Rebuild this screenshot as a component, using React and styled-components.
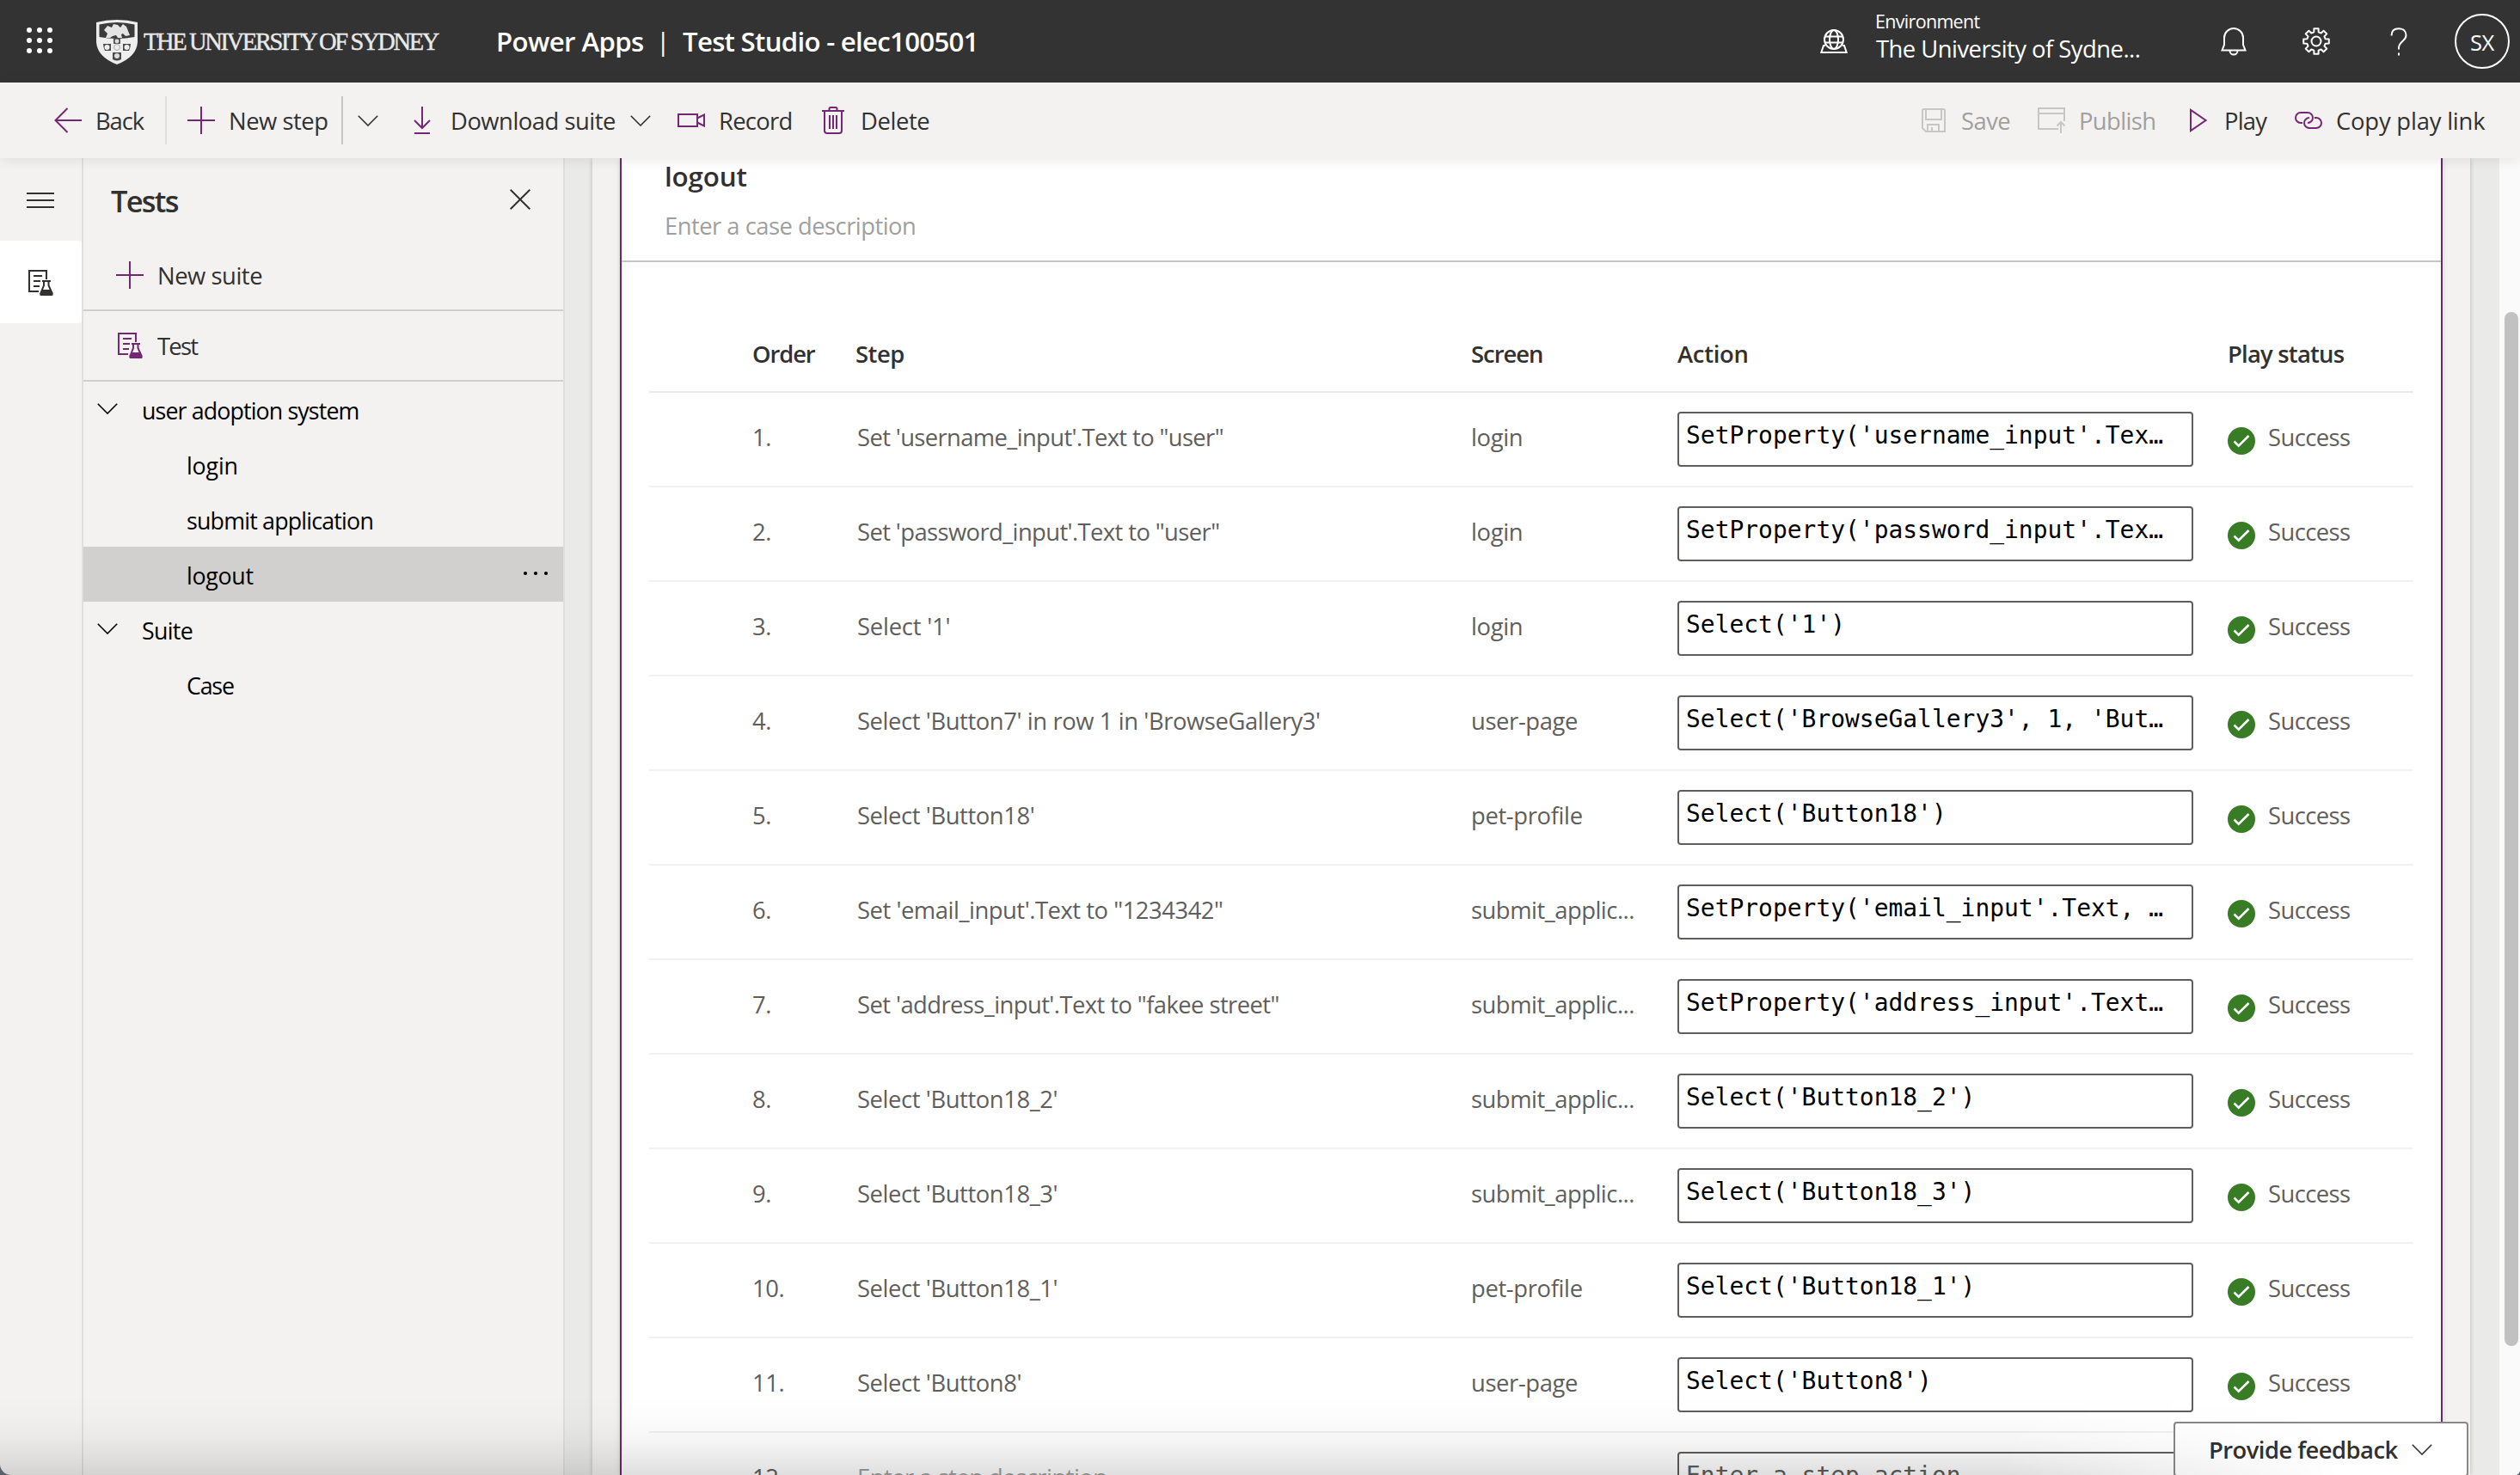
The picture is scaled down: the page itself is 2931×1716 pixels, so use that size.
import React from 'react';
import styled, { createGlobalStyle, css } from 'styled-components';

const purple = '#742774';

const GlobalStyle = createGlobalStyle`
  *, *::before, *::after { box-sizing: border-box; }
  html, body { margin: 0; padding: 0; overflow: hidden; background: #59616a; }
  svg { display: block; flex: none; }
`;

const Window = styled.div`
  position: relative;
  width: 2931px;
  height: 1716px;
  display: flex;
  flex-direction: column;
  overflow: hidden;
  border-radius: 0 0 6px 13px;
  background: #f3f2f1;
  color: #323130;
  font-family: 'Open Sans', 'Noto Sans', sans-serif;
  font-size: 27.4px;
  white-space: nowrap;
`;

const Label = styled.span`
  letter-spacing: ${(p) => p.$track || -0.018}em;
`;

/* ---------- header ---------- */

const Header = styled.header`
  flex: none;
  height: 96px;
  display: flex;
  align-items: center;
  background: #333333;
  color: #fff;
`;

const Waffle = styled.div`
  width: 111px;
  padding-left: 31px;
  padding-bottom: 2px;
`;

const Wordmark = styled.div`
  width: 466px;
  display: flex;
  align-items: center;
  gap: 6px;
  font-family: 'Liberation Serif', serif;
  font-size: 28.5px;
  letter-spacing: -0.083em;
  color: #e9e9e9;
  -webkit-text-stroke: 0.4px #e9e9e9;
  svg { margin-top: 1px; }
  span { padding-top: 2px; }
`;

const Brand = styled.div`
  width: 186px;
  font-size: 31.2px;
  font-weight: 600;
  letter-spacing: -0.02em;
`;

const BrandBar = styled(Brand)`
  width: 17px;
  margin-right: 14px;
  padding-bottom: 2px;
  font-weight: 400;
  font-size: 30px;
`;

const AppTitle = styled(Brand)`
  flex: 1;
  width: auto;
  letter-spacing: -0.023em;
`;

const Environment = styled.div`
  width: 433px;
  height: 96px;
  display: flex;
  gap: 32px;
  svg { margin-top: 34px; }
`;

const EnvironmentText = styled.div`
  display: flex;
  flex-direction: column;
`;

const EnvironmentCaption = styled.span`
  margin-top: 10px;
  font-size: 21.5px;
  line-height: 30px;
  letter-spacing: -0.032em;
`;

const EnvironmentName = styled.span`
  line-height: 34px;
  letter-spacing: -0.019em;
  margin-left: 1px;
`;

const HeaderButton = styled.div`
  width: 96px;
  height: 96px;
  display: flex;
  align-items: center;
  justify-content: center;
`;

const Avatar = styled.div`
  width: 64px;
  height: 64px;
  margin: 0 12px 0 17px;
  display: flex;
  align-items: center;
  justify-content: center;
  padding-top: 2px;
  border: 2px solid #fff;
  border-radius: 50%;
  font-size: 25.5px;
`;

/* ---------- command bar ---------- */

const CommandBar = styled.nav`
  position: relative;
  z-index: 2;
  flex: none;
  height: 88px;
  display: flex;
  align-items: center;
  padding: 0 37px 0 63px;
  background: #f3f2f1;
  box-shadow: 0 2px 14px rgba(0, 0, 0, 0.09);
`;

const Command = styled.div`
  width: ${(p) => p.$w}px;
  padding-left: ${(p) => p.$pad || 0}px;
  display: flex;
  align-items: center;
  gap: ${(p) => p.$gap || 16}px;
  color: ${(p) => (p.$off ? '#a19f9d' : '#323130')};
`;

const CommandIcon = styled.span`
  width: 32px;
  flex: none;
  display: flex;
  justify-content: center;
  color: ${(p) => (p.$off ? '#c8c6c4' : purple)};
`;

const Separator = styled.span`
  width: 2px;
  height: 56px;
  background: ${(p) => (p.$dark ? '#c8c6c4' : '#e1dfdd')};
`;

const SplitChevron = styled.div`
  width: 58px;
  display: flex;
  justify-content: center;
`;

const Spacer = styled.div`
  flex: 1;
`;

/* ---------- left rail and tree ---------- */

const Body = styled.div`
  flex: 1;
  min-height: 0;
  display: flex;
`;

const Rail = styled.aside`
  width: 97px;
  flex: none;
  border-right: 2px solid #e1dfdd;
`;

const RailItem = styled.div`
  height: 96px;
  padding: 2px 1px 0 0;
  display: flex;
  align-items: center;
  justify-content: center;
  ${(p) =>
    p.$active &&
    css`
      background: #fff;
      border-radius: 0 4px 4px 0;
    `}
`;

const TestsPanel = styled.aside`
  width: 560px;
  flex: none;
  border-right: 2px solid #e1dfdd;
`;

const PanelHeader = styled.div`
  height: 96px;
  display: flex;
  align-items: center;
  justify-content: space-between;
  padding: 2px 38px 0 32px;
  font-size: 34.4px;
  font-weight: 600;
  svg { margin-bottom: 2px; }
`;

const PanelAction = styled.div`
  height: ${(p) => p.$h}px;
  padding-left: 38px;
  display: flex;
  align-items: center;
  gap: 16px;
  border-bottom: 2px solid #d0cfcd;
`;

const PanelActionLabel = styled(Label)`
  padding-top: 1px;
`;

const PanelActionIcon = styled.span`
  width: 32px;
  display: flex;
  justify-content: center;
  color: ${purple};
`;

const TreeRow = styled.div`
  height: 64px;
  display: flex;
  align-items: center;
  padding: 2px 17px 0 ${(p) => (p.$child ? 120 : 16)}px;
  font-size: 26.8px;
  color: #000;
  background: ${(p) => (p.$selected ? '#d2d0ce' : 'transparent')};
  svg { margin-bottom: 4px; }
`;

const SuiteName = styled.span`
  margin-left: 28px;
`;

/* ---------- case sheet ---------- */

const Stage = styled.main`
  flex: 1;
  display: flex;
  justify-content: flex-start;
  padding-left: 32px;
  background: #eaeae8;
`;

const Sheet = styled.section`
  width: 2184px;
  flex: none;
  padding: 0 32px;
  background: #f3f2f1;
  box-shadow: 0 0 5px rgba(0, 0, 0, 0.22);
`;

const CaseCard = styled.section`
  width: 2120px;
  height: 1532px;
  overflow: hidden;
  border: solid #68286a;
  border-width: 0 2px;
  background: #fff;
  box-shadow: 0 0 6px rgba(0, 0, 0, 0.13);
`;

const CaseHeader = styled.div`
  height: 121px;
  padding-left: 50px;
  display: flex;
  flex-direction: column;
  gap: 16px;
  border-bottom: 2px solid #c8c6c4;
`;

const CaseTitle = styled.div`
  font-size: 31.4px;
  font-weight: 600;
  line-height: 41px;
  letter-spacing: -0.005em;
`;

const CaseDescription = styled.div`
  line-height: 44px;
  letter-spacing: -0.019em;
  color: #a19f9d;
`;

const Table = styled.div`
  width: 2052px;
  margin: 62px 0 0 32px;
`;

const tableGrid = css`
  display: grid;
  grid-template-columns: 120px 120px 716px 240px 640px 1fr;
  align-items: center;
`;

const TableHead = styled.div`
  ${tableGrid}
  height: 90px;
  padding-top: 1px;
  font-weight: 600;
  border-bottom: 2px solid #eaeaea;
`;

const TableRow = styled.div`
  ${tableGrid}
  height: 110px;
  color: #605e5c;
  border-bottom: 2px solid #f1f1f1;
`;

const Cell = styled.span`
  padding: 0 0 6px ${(p) => p.$indent || 0}px;
  letter-spacing: ${(p) => p.$track || -0.015}em;
  color: ${(p) => (p.$hint ? '#a19f9d' : 'inherit')};
`;

const ActionField = styled.div`
  width: 600px;
  height: 64px;
  padding: 0 8px;
  border: 2px solid #605e5c;
  border-radius: 4px;
  background: #fff;
  font-family: 'DejaVu Sans Mono', monospace;
  font-size: 27.95px;
  line-height: 52px;
  color: ${(p) => (p.$hint ? '#605e5c' : '#000')};
`;

const Status = styled.div`
  display: flex;
  align-items: center;
  gap: 15px;
  svg { margin-top: 4px; }
`;

const ScrollTrack = styled.div`
  width: 24px;
  margin-left: auto;
  padding: 179px 0 0 6px;
  background: #fafafa;
`;

const ScrollThumb = styled.div`
  width: 16px;
  height: 1203px;
  border-radius: 8px;
  background: #c1c1c1;
`;

/* ---------- overlays ---------- */

const BottomShade = styled.div`
  position: absolute;
  z-index: 4;
  left: 0;
  bottom: 0;
  width: 2760px;
  height: 92px;
  pointer-events: none;
  background: linear-gradient(
    to bottom,
    rgba(0, 0, 0, 0) 0%,
    rgba(0, 0, 0, 0.012) 30%,
    rgba(0, 0, 0, 0.04) 56%,
    rgba(0, 0, 0, 0.08) 78%,
    rgba(0, 0, 0, 0.125) 100%
  );
  mask-image: linear-gradient(to right, #000 0, #000 2330px, transparent 2720px);
`;

const FeedbackButton = styled.div`
  position: absolute;
  z-index: 3;
  left: 2528px;
  bottom: -2px;
  width: 343px;
  height: 64px;
  padding: 0 40px 0 39px;
  display: flex;
  align-items: center;
  justify-content: space-between;
  border: 2px solid #8a8886;
  border-radius: 4px;
  background: #fff;
  font-weight: 600;
`;

/* ---------- icons ---------- */

const Icon = ({ w, h, children, stroke = 2 }) => (
  <svg width={w} height={h} viewBox={`0 0 ${w} ${h}`} fill="none" stroke="currentColor" strokeWidth={stroke}>
    {children}
  </svg>
);

const Chevron = () => (
  <Icon w={24} h={13} stroke={1.6}><path d="M.8 .8 12 12 23.2 .8" /></Icon>
);
const BackIcon = () => (
  <Icon w={32} h={30}><path d="M15.5 1 1.5 15l14 14M1.5 15H32" /></Icon>
);
const PlusIcon = () => (
  <Icon w={32} h={32}><path d="M16 0v32M0 16h32" /></Icon>
);
const DownloadIcon = () => (
  <Icon w={20} h={32}><path d="M10 0v25M1 16l9 9 9-9M1 31h18" /></Icon>
);
const CameraIcon = () => (
  <Icon w={32} h={16}><path d="M1 1h22v14H1zM23 5.5l8-4v13l-8-4" /></Icon>
);
const TrashIcon = () => (
  <Icon w={26} h={32}><path d="M0 5h26M8.5 5V2.500Q8.500 1 10 1h6q1.500 0 1.500 1.500V5M3 5v23q0 3 3 3h14q3 0 3-3V5M9 10v16M13 10v16M17 10v16" /></Icon>
);
const SaveIcon = () => (
  <Icon w={28} h={28}><path d="M2.500 1H25.500Q27 1 27 2.500V27H5L1 23V2.500Q1 1 2.500 1ZM5 1v12h18V1M7 27v-8h13v8M12 22v5" /></Icon>
);
const PublishIcon = () => (
  <Icon w={32} h={30}><path d="M31 16V1H1v24h23M1 7h30M27 30V17M22.500 21.500 27 17l4.500 4.500" /></Icon>
);
const PlayIcon = () => (
  <Icon w={20} h={28}><path d="M1 2v24L18.500 14z" /></Icon>
);
const LinkIcon = () => (
  <Icon w={32} h={20}><path d="M9 13H7A6 6 0 0 1 7 1h8a6 6 0 0 1 0 12M23 7h2a6 6 0 0 1 0 12h-8a6 6 0 0 1 0-12" /></Icon>
);
const MenuIcon = () => (
  <Icon w={32} h={18}><path d="M0 1h32M0 9h32M0 17h32" /></Icon>
);
const CloseIcon = () => (
  <Icon w={24} h={24}><path d="M.7 .7l22.600 22.600M23.300 .7.7 23.300" /></Icon>
);
const TestIcon = () => (
  <Icon w={29} h={30}>
    <path d="M12 25H1V1h20v10M6 7h10M6 13h8M6 19h7M16 13h10M18 13v5l-4 10M23.500 13v5l4.500 10" />
    <path d="M15.700 23h10.600l2.200 5.200Q29 30 27.500 30H14.500Q13 30 13.500 28.200z" fill="currentColor" stroke="none" />
  </Icon>
);
const GlobeIcon = () => (
  <Icon w={32} h={28}>
    <circle cx="16" cy="12" r="11" />
    <ellipse cx="16" cy="12" rx="5" ry="11" />
    <path d="M6 8.500h20M6 15.500h20M6 19H4L1.300 27h29.400L28 19h-2" />
  </Icon>
);
const BellIcon = () => (
  <Icon w={30} h={33}><path d="M1.500 26.500 4 20V12a11 11 0 0 1 22 0v8l2.500 6.500zM10.500 27a4.500 4.500 0 0 0 9 0" /></Icon>
);
const HelpIcon = () => (
  <Icon w={20} h={33}><path d="M1.500 9.500C1.500 4 5 1.200 10 1.200s8.500 3 8.500 7.800c0 7-8.500 7-8.500 14.500v2M10 29.500v3" /></Icon>
);

const gearPoints = Array.from({ length: 8 }, (_, i) => {
  const at = (deg, r) => {
    const a = ((i * 45 + deg) * Math.PI) / 180;
    return `${(16 + r * Math.cos(a)).toFixed(2)},${(16 + r * Math.sin(a)).toFixed(2)}`;
  };
  return [at(-14, 11), at(-10, 15), at(10, 15), at(14, 11)].join(' ');
}).join(' ');

const GearIcon = () => (
  <Icon w={32} h={32}>
    <polygon points={gearPoints} strokeLinejoin="round" />
    <circle cx="16" cy="16" r="5.500" />
  </Icon>
);

const WaffleIcon = () => (
  <svg width="30" height="30" viewBox="0 0 30 30" fill="#fff">
    {[3, 15, 27].map((y) => [3, 15, 27].map((x) => <circle key={`${x}-${y}`} cx={x} cy={y} r="3" />))}
  </svg>
);

const DotsIcon = () => (
  <svg width="30" height="6" viewBox="0 0 30 6" fill="#000">
    {[3, 15, 27].map((x) => <circle key={x} cx={x} cy="3" r="2.100" />)}
  </svg>
);

const SuccessIcon = () => (
  <svg width="32" height="32" viewBox="0 0 32 32" fill="none">
    <circle cx="16" cy="16" r="16" fill="#387c26" />
    <path d="M7.500 16.500l5.200 5.200L24.500 10" stroke="#fff" strokeWidth="2.600" />
  </svg>
);

const Crest = () => (
  <svg width="50" height="54" viewBox="0 0 50 54">
    <path d="M1 4Q25-2 49 4V27Q48 44 25 53 2 44 1 27z" fill="#eee" />
    <path d="M4.500 6.500Q25 1.500 45.500 6.500V21Q25 25 4.500 21z" fill="#3b3b3b" />
    <path d="M10 13l4-5 5 2 2-4 5 1 3 3 3-4 4 3 2 5 2 5-5 1-3-3-2 1 1 4h-5l-2-3-4 1-3 2h-5l2-5-2-2z" fill="#e4e4e4" />
    <path d="M9 29h9v8h-7Q9 33 9 29zM32 29h9q0 4-2 8h-7zM20 39h10v8q-5 3-10 0z" fill="#4a4a4a" />
    <path d="M21 23h8v6h-8z" fill="#555" />
    <circle cx="13.500" cy="33" r="3" fill="#eee" />
    <circle cx="36.500" cy="33" r="3" fill="#eee" />
    <circle cx="25" cy="43" r="3" fill="#ddd" />
    <circle cx="25" cy="26" r="2.400" fill="#ddd" />
    <circle cx="25" cy="33" r="3.500" fill="none" stroke="#aaa" />
  </svg>
);

/* ---------- data ---------- */

const steps = [
  ["Set 'username_input'.Text to \"user\"", 'login', "SetProperty('username_input'.Tex…", -0.023],
  ["Set 'password_input'.Text to \"user\"", 'login', "SetProperty('password_input'.Tex…", -0.022],
  ["Select '1'", 'login', "Select('1')", -0.008],
  ["Select 'Button7' in row 1 in 'BrowseGallery3'", 'user-page', "Select('BrowseGallery3', 1, 'But…"],
  ["Select 'Button18'", 'pet-profile', "Select('Button18')"],
  ["Set 'email_input'.Text to \"1234342\"", 'submit_applic...', "SetProperty('email_input'.Text, …", -0.017],
  ["Set 'address_input'.Text to \"fakee street\"", 'submit_applic...', "SetProperty('address_input'.Text…", -0.021],
  ["Select 'Button18_2'", 'submit_applic...', "Select('Button18_2')"],
  ["Select 'Button18_3'", 'submit_applic...', "Select('Button18_3')"],
  ["Select 'Button18_1'", 'pet-profile', "Select('Button18_1')"],
  ["Select 'Button8'", 'user-page', "Select('Button8')"],
];

const screenTrack = { login: -0.013, 'user-page': -0.014, 'pet-profile': -0.013, 'submit_applic...': -0.018 };

const suites = [
  {
    name: 'user adoption system',
    track: -0.033,
    cases: [
      { name: 'login', track: -0.006 },
      { name: 'submit application', track: -0.03 },
      { name: 'logout', track: -0.012, selected: true },
    ],
  },
  { name: 'Suite', track: -0.026, cases: [{ name: 'Case', track: -0.045 }] },
];

export default function App() {
  return (
    <>
      <GlobalStyle />
      <Window>
        <Header>
          <Waffle><WaffleIcon /></Waffle>
          <Wordmark><Crest /><span>THE UNIVERSITY OF SYDNEY</span></Wordmark>
          <Brand>Power Apps</Brand>
          <BrandBar>|</BrandBar>
          <AppTitle>Test Studio - elec100501</AppTitle>
          <Environment>
            <GlobeIcon />
            <EnvironmentText>
              <EnvironmentCaption>Environment</EnvironmentCaption>
              <EnvironmentName>The University of Sydne...</EnvironmentName>
            </EnvironmentText>
          </Environment>
          <HeaderButton><BellIcon /></HeaderButton>
          <HeaderButton><GearIcon /></HeaderButton>
          <HeaderButton><HelpIcon /></HeaderButton>
          <Avatar><Label $track={-0.011}>SX</Label></Avatar>
        </Header>

        <CommandBar>
          <Command $w={129}><CommandIcon><BackIcon /></CommandIcon><Label $track={-0.04}>Back</Label></Command>
          <Separator />
          <Command $w={203} $pad={24}><CommandIcon><PlusIcon /></CommandIcon><Label $track={-0.017}>New step</Label></Command>
          <Separator $dark />
          <SplitChevron><Chevron /></SplitChevron>
          <Command $w={299} $pad={18} $gap={17}>
            <CommandIcon><DownloadIcon /></CommandIcon>
            <Label>Download suite</Label>
            <Chevron />
          </Command>
          <Command $w={165} $pad={32}><CommandIcon><CameraIcon /></CommandIcon><Label $track={-0.027}>Record</Label></Command>
          <Command $w={165} $pad={32}><CommandIcon><TrashIcon /></CommandIcon><Label $track={-0.015}>Delete</Label></Command>
          <Spacer />
          <Command $w={137} $off><CommandIcon $off><SaveIcon /></CommandIcon><Label $track={-0.019}>Save</Label></Command>
          <Command $w={171} $off><CommandIcon $off><PublishIcon /></CommandIcon><Label $track={-0.023}>Publish</Label></Command>
          <Command $w={128} $gap={14}><CommandIcon><PlayIcon /></CommandIcon><Label $track={-0.028}>Play</Label></Command>
          <Command $w={225}><CommandIcon><LinkIcon /></CommandIcon><Label $track={-0.007}>Copy play link</Label></Command>
        </CommandBar>

        <Body>
          <Rail>
            <RailItem><MenuIcon /></RailItem>
            <RailItem $active><TestIcon /></RailItem>
          </Rail>

          <TestsPanel>
            <PanelHeader><Label $track={-0.05}>Tests</Label><CloseIcon /></PanelHeader>
            <PanelAction $h={82}>
              <PanelActionIcon><PlusIcon /></PanelActionIcon>
              <PanelActionLabel $track={-0.017}>New suite</PanelActionLabel>
            </PanelAction>
            <PanelAction $h={82}>
              <PanelActionIcon><TestIcon /></PanelActionIcon>
              <PanelActionLabel $track={-0.065}>Test</PanelActionLabel>
            </PanelAction>
            {suites.map((suite) => (
              <React.Fragment key={suite.name}>
                <TreeRow>
                  <Chevron />
                  <SuiteName><Label $track={suite.track}>{suite.name}</Label></SuiteName>
                </TreeRow>
                {suite.cases.map((item) => (
                  <TreeRow key={item.name} $child $selected={item.selected}>
                    <Label $track={item.track}>{item.name}</Label>
                    {item.selected && <><Spacer /><DotsIcon /></>}
                  </TreeRow>
                ))}
              </React.Fragment>
            ))}
          </TestsPanel>

          <Stage>
            <Sheet>
              <CaseCard>
                <CaseHeader>
                  <CaseTitle>logout</CaseTitle>
                  <CaseDescription>Enter a case description</CaseDescription>
                </CaseHeader>
                <Table>
                  <TableHead>
                    <span />
                    <Label $track={-0.04}>Order</Label>
                    <Label>Step</Label>
                    <Label $track={-0.037}>Screen</Label>
                    <Label $track={-0.01}>Action</Label>
                    <Label $track={-0.028}>Play status</Label>
                  </TableHead>
                  {steps.map(([step, screen, action, track], i) => (
                    <TableRow key={action}>
                      <span />
                      <Cell>{i + 1}.</Cell>
                      <Cell $indent={2} $track={track}>{step}</Cell>
                      <Cell $track={screenTrack[screen]}>{screen}</Cell>
                      <ActionField>{action}</ActionField>
                      <Status><SuccessIcon /><Cell $track={-0.021}>Success</Cell></Status>
                    </TableRow>
                  ))}
                  <TableRow>
                    <span />
                    <Cell>12.</Cell>
                    <Cell $indent={2} $track={-0.019} $hint>Enter a step description</Cell>
                    <span />
                    <ActionField $hint>Enter a step action</ActionField>
                  </TableRow>
                </Table>
              </CaseCard>
            </Sheet>
            <ScrollTrack><ScrollThumb /></ScrollTrack>
          </Stage>
        </Body>

        <FeedbackButton><Label $track={-0.02}>Provide feedback</Label><Chevron /></FeedbackButton>
        <BottomShade />
      </Window>
    </>
  );
}
